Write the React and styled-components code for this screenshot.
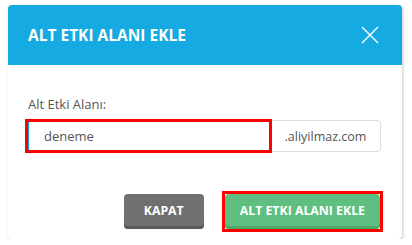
import React from 'react';
import styled, { createGlobalStyle, css } from 'styled-components';

const GlobalStyle = createGlobalStyle`
  body {
    margin: 0;
    background: #ffffff;
    font-family: "Open Sans", "Liberation Sans", sans-serif;
  }
`;

// red annotation frame drawn over marked elements
const marked = css`
  position: relative;
  &::after {
    content: '';
    position: absolute;
    inset: ${p => p.$inset}px;
    border: 3px solid #ff0000;
    pointer-events: none;
    z-index: 2;
  }
`;

const Page = styled.div`
  padding: 5px 10px 0 8px;
`;

const Dialog = styled.div`
  width: 394px;
  background: #fff;
  border-radius: 4px;
  box-shadow: 1px 1px 3px rgba(0, 0, 0, 0.22);
  overflow: hidden;
`;

const Header = styled.div`
  height: 60px;
  background: #15aae1;
  display: flex;
  align-items: center;
  justify-content: space-between;
  padding: 0 23px 0 20px;
  box-sizing: border-box;
`;

const Title = styled.h4`
  margin: 0;
  color: #fff;
  font-size: 15.5px;
  font-weight: 700;
`;

const CloseButton = styled.button`
  border: 0;
  background: none;
  padding: 0;
  width: 18px;
  height: 18px;
  display: flex;
  cursor: pointer;
`;

const Body = styled.div`
  padding: 30px 21px 0 18px;
`;

const Label = styled.label`
  display: block;
  font-size: 13px;
  line-height: 18px;
  color: #555;
  margin: 0 0 7px 2px;
`;

const InputGroup = styled.div`
  display: flex;
  height: 32px;
`;

const InputWrap = styled.div`
  width: 245px;
  display: flex;
  ${marked}
`;

const Input = styled.input`
  flex: 1;
  min-width: 0;
  box-sizing: border-box;
  border: 1px solid #ddd;
  border-radius: 4px 0 0 4px;
  padding: 0 0 0 17px;
  font-family: inherit;
  font-size: 13px;
  color: #555;
  outline: none;
  box-shadow: inset 2px 0 0 #1a9ad6;
`;

const Addon = styled.span`
  flex: 1;
  display: flex;
  align-items: center;
  justify-content: center;
  border: 1px solid #ddd;
  border-left: 0;
  border-radius: 0 4px 4px 0;
  font-size: 12.5px;
  color: #555;
`;

const Footer = styled.div`
  display: flex;
  justify-content: flex-end;
  gap: 21px;
  padding: 42px 22px 10px 0;
`;

const ButtonWrap = styled.div`
  display: flex;
  ${p => p.$marked && marked}
`;

const Button = styled.button`
  height: 35px;
  padding: 0 ${p => p.$px}px 2px;
  border: 0;
  border-radius: 4px;
  background: ${p => p.$bg};
  box-shadow: inset 0 -3px 0 ${p => p.$shade};
  color: #fff;
  font-family: inherit;
  font-size: 12.3px;
  font-weight: 700;
  cursor: pointer;
`;

const CloseIcon = () => (
  <svg width="18" height="18" viewBox="0 0 18 18">
    <path d="M1 1 L17 17 M17 1 L1 17" stroke="#fff" strokeWidth="1.4" fill="none" />
  </svg>
);

export default function App() {
  return (
    <>
      <GlobalStyle />
      <Page>
        <Dialog>
          <Header>
            <Title>ALT ETKI ALANI EKLE</Title>
            <CloseButton aria-label="Kapat">
              <CloseIcon />
            </CloseButton>
          </Header>
          <Body>
            <Label>Alt Etki Alanı:</Label>
            <InputGroup>
              <InputWrap $inset={-1}>
                <Input defaultValue="deneme" />
              </InputWrap>
              <Addon>.aliyilmaz.com</Addon>
            </InputGroup>
          </Body>
          <Footer>
            <ButtonWrap>
              <Button $bg="#6f706f" $shade="#5a5b5a" $px={20}>KAPAT</Button>
            </ButtonWrap>
            <ButtonWrap $marked $inset={-3}>
              <Button $bg="#5fbf80" $shade="#4ea86c" $px={15}>ALT ETKI ALANI EKLE</Button>
            </ButtonWrap>
          </Footer>
        </Dialog>
      </Page>
    </>
  );
}
